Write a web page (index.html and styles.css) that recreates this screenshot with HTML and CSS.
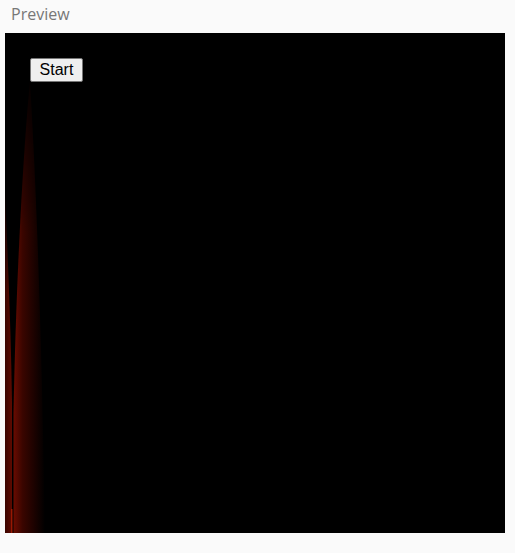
FILE: index.html
```html
<!DOCTYPE html>
<html>
<head>
<meta charset="utf-8">
<link rel="stylesheet" href="styles.css">
</head>
<body>
<div class="panel">
  <div class="title">Preview</div>
  <div class="stage">
    <svg class="canvas" width="500" height="500" viewBox="0 0 500 500">
      <defs>
        <linearGradient id="ga" gradientUnits="userSpaceOnUse" x1="0" y1="0" x2="8" y2="0">
          <stop offset="0" stop-color="#3a0500"/>
          <stop offset="1" stop-color="#640b01"/>
        </linearGradient>
        <linearGradient id="gb" gradientUnits="userSpaceOnUse" x1="8" y1="0" x2="40" y2="0">
          <stop offset="0" stop-color="#6c0c01"/>
          <stop offset="0.3" stop-color="#3a0500"/>
          <stop offset="1" stop-color="#000"/>
        </linearGradient>
        <linearGradient id="fade" gradientUnits="userSpaceOnUse" x1="0" y1="45" x2="0" y2="200">
          <stop offset="0" stop-color="#222"/>
          <stop offset="1" stop-color="#fff"/>
        </linearGradient>
        <mask id="mb">
          <rect x="0" y="0" width="500" height="500" fill="url(#fade)"/>
        </mask>
        <linearGradient id="fadeA" gradientUnits="userSpaceOnUse" x1="0" y1="160" x2="0" y2="260">
          <stop offset="0" stop-color="#444"/>
          <stop offset="1" stop-color="#fff"/>
        </linearGradient>
        <mask id="ma">
          <rect x="0" y="0" width="500" height="500" fill="url(#fadeA)"/>
        </mask>
      </defs>
      <rect width="500" height="500" fill="#000"/>
      <path d="M0,160 C3,230 6,300 7,370 L7,500 L0,500 Z" fill="url(#ga)" mask="url(#ma)"/>
      <path d="M25,48 C18,120 11,250 8.5,380 L8.5,500 L40,500 C38,380 34,200 25,48 Z" fill="url(#gb)" mask="url(#mb)"/>
      <rect x="6" y="476" width="1.5" height="24" fill="#9a1803"/>
    </svg>
    <button class="start">Start</button>
  </div>
</div>
</body>
</html>
```

FILE: styles.css
```css
html, body {
  margin: 0;
  padding: 0;
  background: #fafafa;
}

.panel {
  width: 515px;
  height: 553px;
  box-sizing: border-box;
  padding: 0 0 0 5px;
}

.title {
  font-family: "Open Sans", "Lato", sans-serif;
  font-size: 16px;
  color: #777;
  height: 33px;
  line-height: 29px;
  padding-left: 6px;
}

.stage {
  position: relative;
  width: 500px;
  height: 500px;
}

.canvas {
  display: block;
}

.start {
  position: absolute;
  left: 25px;
  top: 25px;
  width: 53px;
  height: 24px;
  padding: 0;
  font-family: "Liberation Sans", Arial, sans-serif;
  font-size: 16px;
  color: #000;
  background: #efefef;
  border: 1px solid #767676;
  border-radius: 2px;
}
```
